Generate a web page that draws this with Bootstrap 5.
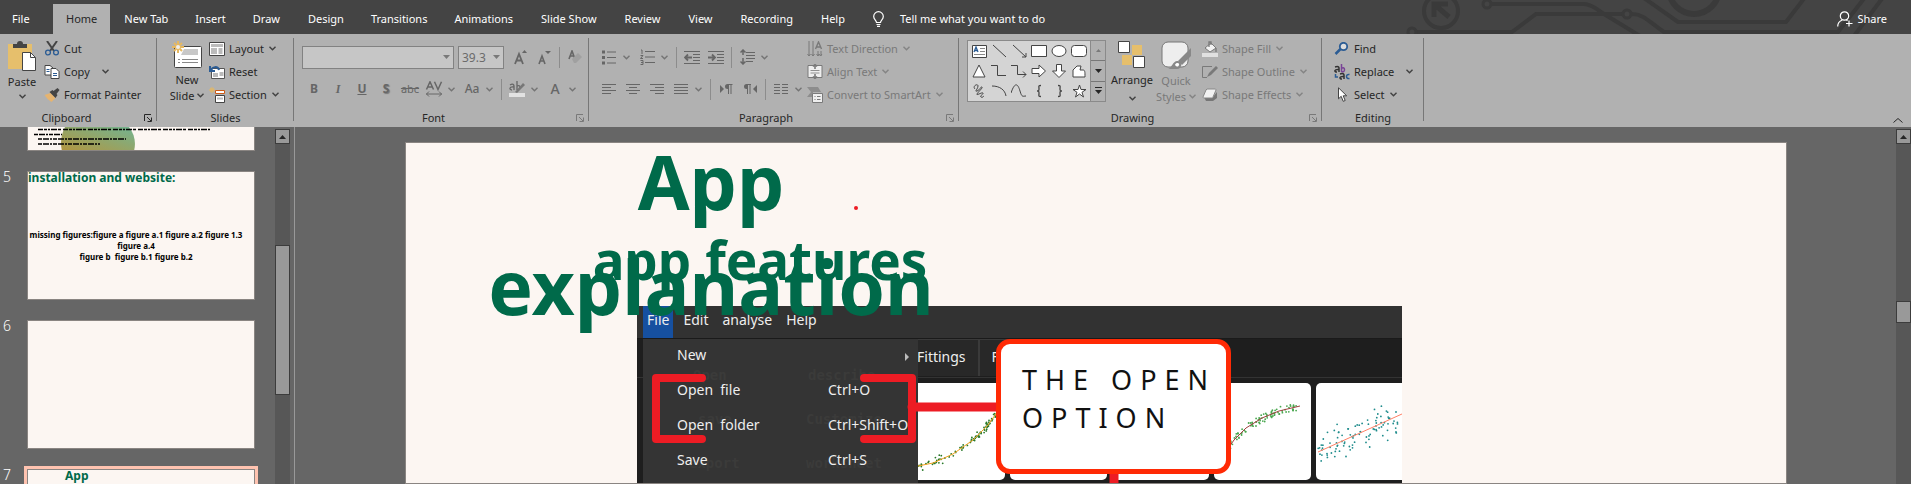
<!DOCTYPE html>
<html lang="en">
<head>
<meta charset="utf-8">
<meta name="viewport" content="width=device-width, initial-scale=1">
<title>Presentation editor</title>
<link href="https://cdn.jsdelivr.net/npm/bootstrap@5.3.0/dist/css/bootstrap.min.css" rel="stylesheet">
<style>
body{font-family:"Noto Sans","Open Sans",sans-serif;font-size:11px;line-height:16px;background:#666;color:#262626;height:100vh;overflow:hidden}
svg{display:block;flex:none}
button{font:inherit;color:inherit;background:none;border:0;padding:0}
/* title tabs */
.topbar{background:#444;height:34px;color:#fff}
.topbar .circuit{position:absolute;right:0;top:0}
.tab{padding:7px 14px 0;height:30px;white-space:nowrap;color:#fff;text-decoration:none;line-height:16px}
.tab-first{width:53px;padding-left:12px}
.tab-slim{padding-left:13px;padding-right:13px}
.tab-on{background:#b1b1b1;color:#262626}
.tab-share{padding-right:24px}
/* ribbon */
.ribbon{background:#b1b1b1;height:93px}
.grp{padding:3px 0 0;position:relative;flex:none;display:flex;flex-direction:column}
.grp::after{content:"";position:absolute;right:0;top:4px;bottom:6px;width:1px;background:#777}
.grp-body{height:70px;display:flex}
.grp-label{text-align:center;line-height:16px;margin-top:3px;position:relative}
.launch{position:absolute;right:5px;top:4px}
.g-clip{width:157px}.g-slides{width:137px}.g-font{width:295px}.g-para{width:370px}.g-draw{width:363px}.g-edit{width:102px}
.cmd{display:flex;align-items:center;gap:4px;height:23px;white-space:nowrap}
.cmd .chev{margin-left:1px}
.cmd .far{margin-left:8px}
.big{display:flex;flex-direction:column;align-items:center;line-height:16px;padding-top:4px;width:44px}
.big svg:first-child{margin-bottom:3px}
.off{color:#797979}
.chev{width:7px;height:5px;fill:none;stroke:currentColor;stroke-width:1.4;opacity:.8}
.ib{width:24px;height:24px;display:flex;align-items:center;justify-content:center;flex:none;color:#666}
.ib.dd{width:38px;display:grid;grid-template-columns:24px 14px;justify-items:center}
.ib.dd .chev{justify-self:start;margin-left:2px}
.vsep{width:1px;height:21px;background:#8c8c8c;margin:0 3px}
.g-txt{font-size:12px;font-weight:700;line-height:16px}
.g-case{font-size:12px;font-weight:500}
.g-tall{font-size:14px;font-weight:500}
.para-icons{width:210px}
.combo{position:relative;height:23px}
.combo input{width:100%;height:100%;border:1px solid #828282;background:#c6c6c6;color:#6b6b6b;font-size:12px;padding:0 3px;border-radius:0;display:block}
.combo svg{position:absolute;right:4px;top:9px}
.name-box{width:152px}.size-box{width:46px}
.gallery{width:139px;height:62px;background:#d4d4d4;border:1px solid #8a8a8a;margin-top:3px}
.shapes{display:grid;grid-template-columns:repeat(6,20px);grid-auto-rows:20px;padding-left:1px;width:122px}
.shapes button{display:flex;align-items:center;justify-content:center}
.gal-nav{border-left:1px solid #8a8a8a;flex:1;display:flex;flex-direction:column}
.gal-nav button{flex:1;display:flex;align-items:center;justify-content:center;background:#b1b1b1}
.gal-nav button+button{border-top:1px solid #777}
.flip{transform:scaleY(-1)}
/* work area */
.work{min-height:0}
.thumbs{width:275px;flex:none;overflow:hidden}
.row-th{display:flex;margin-bottom:20px}
.num{width:27px;padding-left:3px;color:#fff;font-size:14px;line-height:12px;font-weight:300;flex:none}
.th{width:228px;height:129px;border:1px solid #8a8582;background:#fcf6f2;position:relative;overflow:hidden;color:#000;flex:none}
.th-cut{height:24px}
.th-sel{outline:3px solid #ffc3b0;outline-offset:0}
.th h2{font-size:12px;line-height:12px;font-weight:700;color:#006a4a;margin:0}
.th-sel h2{padding-left:37px}
.th p{font-size:8px;line-height:11px;font-weight:700;text-align:center;margin:45px 0 0;padding-right:10px;white-space:nowrap}
.sbar{width:15px;flex:none;background:#575757;display:flex;flex-direction:column;margin-top:2px}
.sbar button,.knob{border:1px solid #3c3c3c;background:#999;flex:none}
.sbar button{height:15px;display:flex;align-items:center;justify-content:center}
.knob-a{height:150px;margin-top:101px}.knob-b{height:22px;margin-top:157px}
.stage{border-left:1px solid #999;margin-left:4px;padding:15px 109px 0 110px;min-width:0;overflow:hidden}
.slide{background:#fcf6f2;border:1px solid #8a8582;height:100%;position:relative;overflow:hidden}
.ttl{position:absolute;left:75px;top:-14px;width:460px;text-align:center;font-size:75px;line-height:105px;font-weight:700;color:#006a4a;margin:0;z-index:2}
.sub{position:absolute;left:184px;top:80px;width:340px;text-align:center;font-size:53px;line-height:74px;font-weight:700;color:#006a4a;margin:0;z-index:2;white-space:nowrap}
.shot{position:absolute;left:231px;top:163px;width:765px;height:200px;background:#1e1e1e;color:#eee;font-size:14px;line-height:20px;overflow:hidden}
.mbar{height:33px;background:#323232;padding-left:6px;border-bottom:1px solid #1a1a1a}
.mbar span{padding:4px 4px 0;margin-right:6px}
.mbar .hot{background:#1650a0}
.menu{position:absolute;left:6px;top:33px;width:275px;height:170px;background:#343434;z-index:1}
.mi{display:grid;grid-template-columns:151px 1fr;padding:0 0 4px 34px;height:35px;align-items:center;white-space:pre;position:relative}
.ghost{position:absolute;font:700 14px/20px "DejaVu Sans Mono",monospace;color:#3b3b3a}
.stab{border:1px solid #3a3a3a;border-bottom:0;background:#282828;height:37px;padding:7px 12px}
.stabs{padding-left:267px}
.plots{border-top:1px solid #333;margin-top:1px;padding:5px 0 0 271px;display:flex;gap:5px}
.plot{width:97px;height:97px;background:#fff;border-radius:5px;flex:none}
.over{position:absolute;left:0;top:0;z-index:3}
.callout{position:absolute;left:590px;top:196px;width:235px;height:135px;border:5px solid #ff2a05;border-radius:14px;background:#fff;z-index:4;color:#111;font-size:27px;line-height:38px;letter-spacing:8px;padding:17px 0 0 21px;white-space:nowrap}
</style>
</head>
<body class="d-flex flex-column">
<svg width="0" height="0" class="position-absolute">
<defs>
<symbol id="ch" viewBox="0 0 7 5"><path d="M.5.8 3.5 3.8 6.5.8"/></symbol>
<symbol id="tri" viewBox="0 0 7 4"><path d="M0 0h7L3.500 4z" fill="currentColor"/></symbol>
<symbol id="lau" viewBox="0 0 8 8"><path d="M.5 7V.5H7M3 3l4 4M7.500 3.500v4h-4" fill="none" stroke="currentColor"/></symbol>
</defs>
</svg>

<header class="topbar d-flex align-items-end position-relative flex-shrink-0">
<svg class="circuit" width="531" height="34" viewBox="0 0 531 34" fill="none" stroke="#3a3a3a" stroke-width="4"><circle cx="61" cy="11" r="17"/><path d="M54 17V4h14M54 4l15 13" stroke-width="5"/><circle cx="107" cy="4" r="4" stroke-width="3"/><path d="M112 4h92c8 0 14 6 20 10l36 22"/><path d="M36 32h96l24-18h86"/><circle cx="32" cy="32" r="4" stroke-width="3"/><circle cx="247" cy="14" r="4" stroke-width="3"/><path d="M252 14c12 0 17 8 32 18h174l28-36M264-2l34 24h108l20-26M474 36l30-40"/><circle cx="314" cy="-11" r="25" stroke-width="6"/></svg>
<nav class="d-flex flex-grow-1 position-relative">
<a href="#" class="tab tab-first">File</a><a href="#" class="tab tab-slim tab-on" aria-current="page">Home</a><a href="#" class="tab">New Tab</a><a href="#" class="tab tab-slim">Insert</a><a href="#" class="tab">Draw</a><a href="#" class="tab">Design</a><a href="#" class="tab tab-slim">Transitions</a><a href="#" class="tab">Animations</a><a href="#" class="tab">Slide Show</a><a href="#" class="tab">Review</a><a href="#" class="tab">View</a><a href="#" class="tab">Recording</a><a href="#" class="tab">Help</a>
<a href="#" class="tab d-flex gap-3"><svg width="11" height="16" viewBox="0 0 11 16" fill="none" stroke="#fff" stroke-width="1.200"><path d="M3.500 11.500c0-2-2.800-3-2.800-6a4.800 4.800 0 0 1 9.600 0c0 3-2.800 4-2.800 6zM3.500 13.500h4M4 15.400h3"/></svg>Tell me what you want to do</a>
<a href="#" class="tab tab-share d-flex gap-1 ms-auto"><svg width="16" height="16" viewBox="0 0 16 16" fill="none" stroke="#fff" stroke-width="1.200"><circle cx="7.500" cy="5" r="4.200"/><path d="M.7 15.500c0-3 2-5.500 4.500-6.500M9.500 9l1 .8M12 9.500v6M9 12.500h6.500"/></svg>Share</a>
</nav>
</header>

<section class="ribbon d-flex flex-shrink-0 position-relative">
<div class="grp g-clip">
<div class="grp-body">
<button class="big"><svg width="28" height="30" viewBox="0 0 28 30"><path d="M0 3h24v25H0z" fill="#e6bf6c"/><path d="M5 7V3h4a3 3 0 0 1 6 0h4v4z" fill="#444"/><path d="M14.500 11.500h8l5 5v13h-13z" fill="#fff" stroke="#444"/><path d="M22.500 11.500v5h5" fill="none" stroke="#444"/></svg>Paste<svg class="chev mt-1"><use href="#ch"/></svg></button>
<div class="ms-0">
<button class="cmd"><svg width="16" height="15" viewBox="0 0 14 15" fill="none"><path d="M2 0l7 10M12 0L5 10" stroke="#444" stroke-width="2"/><circle cx="3" cy="11.500" r="2.400" stroke="#2b5c94" stroke-width="1.300"/><circle cx="11" cy="11.500" r="2.400" stroke="#2b5c94" stroke-width="1.300"/></svg>Cut</button>
<button class="cmd"><svg width="16" height="14" viewBox="0 0 15 14" fill="#fff" stroke="#444"><path d="M.5.500h5l3 2.500v7h-8z"/><path d="M6.500 3.500h5l3 3v7h-8z"/><path d="M2 4.500h3M2 6.500h3M8.500 8.500h4M8.500 10.500h4" stroke="#2b5c94"/></svg>Copy<svg class="chev far"><use href="#ch"/></svg></button>
<button class="cmd"><svg width="16" height="14" viewBox="0 0 15 14"><path d="M0 7l6-2 5 5-4 4C4 12 2 10 0 7z" fill="#e6b470"/><path d="M5 4l3-2 5 5-2 3zM9 3l4-3 2 2-3 4z" fill="#444"/></svg>Format Painter</button>
</div>
</div>
<div class="grp-label pe-4">Clipboard<svg class="launch" width="8" height="8"><use href="#lau"/></svg></div>
</div>

<div class="grp g-slides">
<div class="grp-body">
<button class="big ms-2"><svg width="31" height="28" viewBox="0 0 31 28"><rect x="2.500" y="5.500" width="27" height="21" rx="1" fill="#fff" stroke="#444"/><path d="M12 8h14v6H9z" fill="#c8c8c8"/><path d="M6 18.500h2M10 18.500h16M6 21.500h2M10 21.500h16" stroke="#888"/><path d="M6 0v12M0 6h12M2 2l8 8M10 2l-8 8" stroke="#e6b860" stroke-width="2"/><circle cx="6" cy="6" r="2" fill="#eee"/></svg>New<span>Slide <svg class="chev d-inline"><use href="#ch"/></svg></span></button>
<div>
<button class="cmd"><svg width="16" height="14" viewBox="0 0 16 14"><path d="M.5.500h15v13H.5z" fill="#fff" stroke="#444"/><path d="M2 2h12v3H2zM2 6h6v6H2z" fill="#bbb"/><path d="M9.500 7h4M9.500 9h4M9.500 11h4" stroke="#777"/></svg>Layout<svg class="chev"><use href="#ch"/></svg></button>
<button class="cmd"><svg width="16" height="14" viewBox="0 0 16 14"><path d="M2.500 3.500h13v10h-13z" fill="#fff" stroke="#555"/><path d="M4 8h5v4H4z" fill="#bbb"/><path d="M10.500 8h4M10.500 10h4" stroke="#777"/><path d="M2 6c1-5 7-5 8-1M1 1v5h5" fill="none" stroke="#2b5c94" stroke-width="2"/></svg>Reset</button>
<button class="cmd"><svg width="16" height="16" viewBox="0 0 16 16"><path d="M6.500 3.500h9v3h-9z" fill="#fff" stroke="#cc5a15"/><path d="M6.500 8.500h9v7h-9z" fill="#fff" stroke="#444"/><path d="M8 10.500h6v2H8z" fill="#bbb"/><path d="M3 0v6M0 3h6M1 1l4 4M5 1L1 5" stroke="#e6b860"/></svg>Section<svg class="chev"><use href="#ch"/></svg></button>
</div>
</div>
<div class="grp-label">Slides</div>
</div>

<div class="grp g-font">
<div class="grp-body flex-column ps-2">
<div class="d-flex align-items-center mt-2">
<div class="combo name-box"><input aria-label="Font"><svg width="7" height="4" class="off"><use href="#tri"/></svg></div>
<div class="combo size-box ms-1"><input aria-label="Font size" value="39.3"><svg width="7" height="4" class="off"><use href="#tri"/></svg></div>
<button class="ib ms-1" aria-label="Grow font"><svg width="13" height="15" viewBox="0 0 13 15"><path d="M1 14L5 4l4 10M2.500 10.500h5" fill="none" stroke="currentColor" stroke-width="1.800"/><path d="M8 3l2.500-3L13 3z" fill="currentColor"/></svg></button>
<button class="ib" aria-label="Shrink font"><svg width="13" height="15" viewBox="0 0 13 15"><path d="M1 14l3-8 3 8M2.500 11h4" fill="none" stroke="currentColor" stroke-width="1.600"/><path d="M7 1h6l-3 3z" fill="currentColor"/></svg></button>
<div class="vsep"></div>
<button class="ib" aria-label="Clear formatting"><svg width="15" height="14" viewBox="0 0 15 14"><path d="M1 9l3-8 3 8M2 6h4" fill="none" stroke="currentColor" stroke-width="1.600"/><path d="M4 9l6-6 4 4-6 6H6z" fill="#a0a0a0"/></svg></button>
</div>
<div class="d-flex align-items-center mt-2">
<button class="ib g-txt">B</button><button class="ib g-txt fst-italic" style="font-family:'Liberation Serif',serif">I</button><button class="ib g-txt text-decoration-underline">U</button><button class="ib g-txt" style="text-shadow:1px 1px 1px #777">S</button><button class="ib text-decoration-line-through">abc</button>
<button class="ib dd" aria-label="Character spacing"><svg width="18" height="16" viewBox="0 0 18 16" fill="none" stroke="currentColor"><path d="M1.500 8.500L5 .8l3.500 7.700M3 6h4M9.500.8L13 8.500 16.500.8" stroke-width="1.500"/><path d="M1 13h16M4 10.500L1.500 13 4 15.500M14 10.500l2.500 2.500-2.500 2.500"/></svg><svg class="chev"><use href="#ch"/></svg></button>
<button class="ib dd g-case">Aa<svg class="chev"><use href="#ch"/></svg></button>
<div class="vsep"></div>
<button class="ib dd" aria-label="Highlight"><svg width="16" height="16" viewBox="0 0 16 16"><path d="M0 12h16v4H0z" fill="#e2e2e2"/><path d="M1 4c3-2 4 0 4 1v4M5 6C0 5 0 9 3 9M8 0v9M8 5c4-2 4 4 0 4" fill="none" stroke="currentColor" stroke-width="1.300"/><path d="M6 11L14 2l2 2-8 8z" fill="#777"/></svg><svg class="chev"><use href="#ch"/></svg></button>
<button class="ib dd g-tall">A<svg class="chev"><use href="#ch"/></svg></button>
</div>
</div>
<div class="grp-label pe-3">Font<svg class="launch off" width="8" height="8"><use href="#lau"/></svg></div>
</div>

<div class="grp g-para">
<div class="grp-body ps-2">
<div class="para-icons">
<div class="d-flex align-items-center mt-2">
<button class="ib dd" aria-label="Bullets"><svg width="14" height="15" viewBox="0 0 14 15" stroke="currentColor"><path d="M5 2h9M5 7.500h9M5 13h9"/><path d="M0 2h3M0 7.500h3M0 13h3" stroke-width="3"/></svg><svg class="chev"><use href="#ch"/></svg></button>
<button class="ib dd" aria-label="Numbering"><svg width="15" height="16" viewBox="0 0 15 16" stroke="currentColor" fill="none"><path d="M5 2.500h10M5 8h10M5 13.500h10M1 1h1v4M.500 6.500H3l-2.500 3H3M.500 11.500H3v4H.500M1 13.500h2"/></svg><svg class="chev"><use href="#ch"/></svg></button>
<div class="vsep"></div>
<button class="ib" aria-label="Decrease indent"><svg width="16" height="13" viewBox="0 0 16 13" stroke="currentColor" fill="none"><path d="M0 .500h16M9 3.500h7M9 6.500h7M9 9.500h7M0 12.500h16"/><path d="M1 6.500h7M4 3.500l-3 3 3 3" stroke-width="1.800"/></svg></button>
<button class="ib" aria-label="Increase indent"><svg width="16" height="13" viewBox="0 0 16 13" stroke="currentColor" fill="none"><path d="M0 .500h16M9 3.500h7M9 6.500h7M9 9.500h7M0 12.500h16"/><path d="M0 6.500h7M4 3.500l3 3-3 3" stroke-width="1.800"/></svg></button>
<div class="vsep"></div>
<button class="ib dd" aria-label="Line spacing"><svg width="15" height="16" viewBox="0 0 15 16" stroke="currentColor" fill="none"><path d="M6 3.500h9M6 6.500h9M6 9.500h9M6 12.500h7"/><path d="M3 1v5M.5 3.500L3 1l2.500 2.500M3 9v6M.5 12.500L3 15l2.500-2.500" stroke-width="1.500"/></svg><svg class="chev"><use href="#ch"/></svg></button>
</div>
<div class="d-flex align-items-center mt-2">
<button class="ib" aria-label="Align left"><svg width="14" height="11" viewBox="0 0 14 11" stroke="currentColor"><path d="M0 .500h14M0 3.500h9M0 6.500h14M0 9.500h9"/></svg></button>
<button class="ib" aria-label="Center"><svg width="14" height="11" viewBox="0 0 14 11" stroke="currentColor"><path d="M0 .500h14M3 3.500h8M0 6.500h14M3 9.500h8"/></svg></button>
<button class="ib" aria-label="Align right"><svg width="14" height="11" viewBox="0 0 14 11" stroke="currentColor"><path d="M0 .500h14M5 3.500h9M0 6.500h14M5 9.500h9"/></svg></button>
<button class="ib dd" aria-label="Justify"><svg width="14" height="11" viewBox="0 0 14 11" stroke="currentColor"><path d="M0 .500h14M0 3.500h14M0 6.500h14M0 9.500h14"/></svg><svg class="chev"><use href="#ch"/></svg></button>
<div class="vsep"></div>
<button class="ib" aria-label="Left to right"><svg width="13" height="10" viewBox="0 0 13 10" fill="currentColor"><path d="M0 1l4 4-4 4zM12.500 0H7.500a2.500 2.500 0 0 0 0 5H8v5h1V1h1.500v9h1V1h1z"/></svg></button>
<button class="ib" aria-label="Right to left"><svg width="13" height="10" viewBox="0 0 13 10" fill="currentColor"><path d="M13 1L9 5l4 4zM7 0H2.500a2.500 2.500 0 0 0 0 5H3v5h1V1h1.500v9h1V1H7z"/></svg></button>
<div class="vsep"></div>
<button class="ib dd" aria-label="Columns"><svg width="14" height="11" viewBox="0 0 14 11" stroke="currentColor"><path d="M0 .500h6M8 .500h6M0 3.500h6M8 3.500h6M0 6.500h6M8 6.500h6M0 9.500h6M8 9.500h6"/></svg><svg class="chev"><use href="#ch"/></svg></button>
</div>
</div>
<div class="off">
<button class="cmd"><svg width="16" height="16" viewBox="0 0 15 16" stroke="currentColor" fill="none"><path d="M1.500 0v15M5.500 0v15M10.500 10v5M13.500 10v5M0 13l1.500 2L3 13M4 13l1.500 2L7 13M9 13l1.500 2 1-2 1.500 2 1.500-2"/><path d="M8 8l3-7 3 7M9 6h4" stroke-width="1.400"/></svg>Text Direction<svg class="chev"><use href="#ch"/></svg></button>
<button class="cmd"><svg width="16" height="15" viewBox="0 0 15 15" stroke="currentColor" fill="none"><path d="M.5 1.500h14v12H.5z" fill="#eee"/><path d="M3 6.500h9M3 9h9" stroke-width=".8"/><path d="M7.500 0v5M5.500 2.500l2-2 2 2M7.500 10v5M5.500 12.500l2 2 2-2" stroke-width="1.600"/></svg>Align Text<svg class="chev"><use href="#ch"/></svg></button>
<button class="cmd"><svg width="16" height="16" viewBox="0 0 16 16"><path d="M0 0h11l3 5H6v5H0l4-5z" fill="#8d8d8d"/><path d="M5.500 6.500h10v9h-10z" fill="#eee" stroke="currentColor"/><path d="M7.500 9.500h1M10 9.500h3.500M7.500 12.500h1M10 12.500h3.500" stroke="currentColor"/></svg>Convert to SmartArt<svg class="chev"><use href="#ch"/></svg></button>
</div>
</div>
<div class="grp-label pe-3">Paragraph<svg class="launch off" width="8" height="8"><use href="#lau"/></svg></div>
</div>

<div class="grp g-draw">
<div class="grp-body ps-2">
<div class="gallery d-flex">
<div class="shapes">
<button aria-label="Text box"><svg width="15" height="13" viewBox="0 0 15 13"><path d="M.5.500h14v12H.5z" fill="#fff" stroke="#444"/><path d="M2 7l2-5 2 5M3 5.500h2" stroke="#2b5c94" stroke-width="1.300" fill="none"/><path d="M8 3.500h5M8 6.500h5M2 9.500h11" stroke="#888"/></svg></button>
<button aria-label="Line"><svg width="15" height="14" viewBox="0 0 15 14" stroke="#444"><path d="M1 1l13 12"/></svg></button>
<button aria-label="Arrow"><svg width="15" height="14" viewBox="0 0 15 14" stroke="#444" fill="none"><path d="M1 1l13 12M14 9v4h-4"/></svg></button>
<button aria-label="Rectangle"><svg width="16" height="12" viewBox="0 0 16 12" stroke="#444" fill="#fff"><path d="M.5.500h15v11H.5z"/></svg></button>
<button aria-label="Oval"><svg width="16" height="12" viewBox="0 0 16 12" stroke="#444" fill="#fff"><ellipse cx="8" cy="6" rx="7" ry="5.500"/></svg></button>
<button aria-label="Rounded rectangle"><svg width="16" height="12" viewBox="0 0 16 12" stroke="#444" fill="#fff"><rect x=".5" y=".5" width="15" height="11" rx="3"/></svg></button>
<button aria-label="Triangle"><svg width="14" height="14" viewBox="0 0 14 14" stroke="#444" fill="#fff"><path d="M7 1l6 12H1z"/></svg></button>
<button aria-label="Elbow"><svg width="16" height="14" viewBox="0 0 16 14" stroke="#444" fill="none"><path d="M0 1.500h6.500v10H15"/></svg></button>
<button aria-label="Elbow arrow"><svg width="16" height="14" viewBox="0 0 16 14" stroke="#444" fill="none"><path d="M0 1.500h6.500v9H15M12 7.500l3 3-3 3"/></svg></button>
<button aria-label="Right arrow"><svg width="16" height="14" viewBox="0 0 16 14" stroke="#444" fill="#fff"><path d="M1 4.500h7V1l6.500 6L8 13V9.500H1z"/></svg></button>
<button aria-label="Down arrow"><svg width="16" height="14" viewBox="0 0 16 14" stroke="#444" fill="#fff"><path d="M5.500.500h5V7h4L8 13.500 1.500 7h4z"/></svg></button>
<button aria-label="Freeform"><svg width="14" height="14" viewBox="0 0 14 14" stroke="#444" fill="#fff"><path d="M1 13V6l4-4h4L8 6h3c2 0 2 2 2 7z"/></svg></button>
<button aria-label="Scribble"><svg width="14" height="14" viewBox="0 0 14 14" stroke="#444" fill="none"><path d="M3 5c-3-3 3-6 3-3S2 8 5 7s4-5 5-4-4 5-5 7 5-2 6-1-4 3-2 4 3-1 2-1"/></svg></button>
<button aria-label="Arc"><svg width="16" height="14" viewBox="0 0 16 14" stroke="#444" fill="none"><path d="M1 2c8 0 13 4 14 10"/></svg></button>
<button aria-label="Curve"><svg width="16" height="14" viewBox="0 0 16 14" stroke="#444" fill="none"><path d="M0 9C4-3 7 0 9 7s3 5 6 5"/></svg></button>
<button aria-label="Left brace"><svg width="14" height="14" viewBox="0 0 14 14" stroke="#444" fill="none" stroke-width="1.300"><path d="M9 1.500c-3 0-2 1-2 3S7 7 5 7c2 0 2 .5 2 2.500s-1 3 2 3"/></svg></button>
<button aria-label="Right brace"><svg width="14" height="14" viewBox="0 0 14 14" stroke="#444" fill="none" stroke-width="1.300"><path d="M6 1.500c3 0 2 1 2 3S8 7 10 7c-2 0-2 .5-2 2.500s1 3-2 3"/></svg></button>
<button aria-label="Star"><svg width="15" height="14" viewBox="0 0 15 14" stroke="#444" fill="#fff"><path d="M7.500 1L9 5.500h5L10 8.300l1.500 4.700-4-3-4 3L5 8.300 1 5.500h5z"/></svg></button>
</div>
<div class="gal-nav"><button class="off" aria-label="Previous shapes"><svg width="5" height="3" class="flip"><use href="#tri"/></svg></button><button aria-label="Next shapes"><svg width="7" height="4"><use href="#tri"/></svg></button><button aria-label="More shapes"><svg width="7" height="8" viewBox="0 0 7 8"><path d="M0 .500h7" stroke="#262626"/><path d="M0 3h7L3.500 7z" fill="#262626"/></svg></button></div>
</div>
<button class="big ms-1"><svg width="28" height="28" viewBox="0 0 28 28"><path d="M14 4h10v10H14zM4 14h10v10H4z" fill="#e6bf6c"/><path d="M.5.500h11v11H.5zM15.500 15.500h11v11h-11z" fill="#fff" stroke="#444"/></svg>Arrange<svg class="chev mt-2"><use href="#ch"/></svg></button>
<button class="big off"><svg width="30" height="29" viewBox="0 0 30 29"><rect x="1" y="1" width="26" height="25" rx="6" fill="#eee" stroke="#777"/><path d="M30 7v8l-9 9-4-4z" fill="#888"/><path d="M7 28c4-1 5-9 10-8s4 8-1 8z" fill="#888"/><path d="M14 24c1-3 5-2 4 0s-2 2-4 0z" fill="#fff"/></svg>Quick<span>Styles <svg class="chev d-inline"><use href="#ch"/></svg></span></button>
<div class="off ms-1">
<button class="cmd"><svg width="16" height="16" viewBox="0 0 16 16"><path d="M0 12h16v4H0z" fill="#e0e0e0"/><path d="M3 7l6-5 5 5-6 4z" fill="#f2f2f2" stroke="currentColor"/><path d="M7 6V1h2v3M14 7v4" fill="none" stroke="currentColor" stroke-width="1.300"/></svg>Shape Fill<svg class="chev"><use href="#ch"/></svg></button>
<button class="cmd"><svg width="16" height="14" viewBox="0 0 16 14"><path d="M10 1.500H.5v11H5" fill="none" stroke="currentColor"/><path d="M5 12l2-4 7-7 2 2-7 7z" fill="currentColor"/></svg>Shape Outline<svg class="chev"><use href="#ch"/></svg></button>
<button class="cmd"><svg width="16" height="14" viewBox="0 0 16 14"><path d="M4 13h7l4-3V4l-4 5H2z" fill="#777"/><path d="M5 1h8c1 0 1 1 1 1l-3 7c0 1-1 1-1 1H2c-1 0-1-1-1-1l3-7z" fill="#f2f2f2" stroke="#888"/></svg>Shape Effects<svg class="chev"><use href="#ch"/></svg></button>
</div>
</div>
<div class="grp-label pe-3">Drawing<svg class="launch off" width="8" height="8"><use href="#lau"/></svg></div>
</div>

<div class="grp g-edit">
<div class="grp-body ps-2">
<div class="ms-1">
<button class="cmd"><svg width="16" height="13" viewBox="0 0 16 13" fill="none" stroke="#2b5c94"><circle cx="9.500" cy="4.500" r="3.700" stroke-width="1.800" fill="#ddd"/><path d="M6.500 7L1.500 12" stroke-width="2.500"/></svg>Find</button>
<button class="cmd"><svg width="16" height="16" viewBox="0 0 16 16" fill="none" stroke-width="1.500"><path d="M1 3c3-1 4 0 4 1v4M5 5.500C0 5 0 8 3 8" stroke="#333"/><path d="M7.500 0v8M7.500 4.500c4-3 4 5 0 3" stroke="#7a4496"/><path d="M6 10c3-1 4 0 4 1v4M10 12.500C5 12 5 15 8 15" stroke="#333"/><path d="M15.500 10.500c-4-1-4 5 0 4M1.500 10v3H4" stroke="#2b5c94"/></svg>Replace<svg class="chev far"><use href="#ch"/></svg></button>
<button class="cmd"><svg width="16" height="15" viewBox="0 0 16 15"><path d="M4.500.800v11l2.700-2.500 2 5 2-.8-2-4.700h3.500z" fill="#fff" stroke="#444"/></svg>Select<svg class="chev"><use href="#ch"/></svg></button>
</div>
</div>
<div class="grp-label">Editing</div>
</div>
<button class="ms-auto align-self-end me-2 mb-1" aria-label="Collapse ribbon"><svg width="10" height="6" viewBox="0 0 10 6" fill="none" stroke="#262626"><path d="M.5 5.500l4.500-4 4.500 4"/></svg></button>
</section>

<main class="work d-flex flex-grow-1">
<aside class="thumbs">
<div class="row-th"><div class="num"></div><div class="th th-cut border-top-0"><svg width="226" height="24" viewBox="0 0 226 24"><defs><linearGradient id="gr" x1="0" y1="1" x2="1" y2="0"><stop offset="0" stop-color="#b3953f"/><stop offset="1" stop-color="#72b592"/></linearGradient></defs><path d="M37 0h64c6 8 7 16 5 24H34c-2-8-1-16 3-24z" fill="url(#gr)"/><g stroke="#000" stroke-width="1.500" fill="none"><path d="M10 2.500h172" stroke-dasharray="5 1 3 1 2 1 6 1 3 2"/><path d="M6 7.500h28M10 12h88M10 17h62" stroke-dasharray="4 1 6 1 2 1"/></g></svg></div></div>
<div class="row-th"><div class="num">5</div><div class="th"><h2>installation and website:</h2><p>missing figures:figure a figure a.1 figure a.2 figure 1.3<br>figure a.4<br>figure b&nbsp; figure b.1 figure b.2</p></div></div>
<div class="row-th"><div class="num">6</div><div class="th"></div></div>
<div class="row-th"><div class="num">7</div><div class="th th-sel"><h2>App</h2></div></div>
</aside>
<div class="sbar"><button aria-label="Scroll up"><svg width="7" height="4" class="flip"><use href="#tri"/></svg></button><div class="knob knob-a"></div></div>
<div class="stage flex-grow-1">
<div class="slide">
<h1 class="ttl">App<br>explanation</h1>
<h2 class="sub">app features</h2>
<div class="shot">
<div class="mbar d-flex"><span class="hot">File</span><span>Edit</span><span>analyse</span><span>Help</span></div>
<div class="menu">
<span class="ghost" style="left:50px;top:26px">Open</span><span class="ghost" style="left:165px;top:26px">describe</span><span class="ghost" style="left:55px;top:70px">save</span><span class="ghost" style="left:163px;top:70px">Customize</span><span class="ghost" style="left:46px;top:114px">export</span><span class="ghost" style="left:163px;top:114px">worksheet</span>
<div class="mi"><span>New</span><svg width="5" height="8" viewBox="0 0 5 8" class="position-absolute end-0 me-2"><path d="M0 0l4 4-4 4z" fill="#bbb"/></svg></div>
<div class="mi"><span>Open  file</span><span>Ctrl+O</span></div>
<div class="mi"><span>Open  folder</span><span>Ctrl+Shift+O</span></div>
<div class="mi"><span>Save</span><span>Ctrl+S</span></div>
</div>
<div class="stabs d-flex"><span class="stab">Fittings</span><span class="stab">F</span></div>
<div class="plots">
<svg class="plot" data-c="#2a7a2a" data-l="#f0a020" data-p="0,85 10,83 25,80 45,71 65,57 80,42 97,18" data-s="5"></svg><svg class="plot"></svg><svg class="plot"></svg>
<svg class="plot" data-c="#4aa850" data-l="#a04040" data-p="0,85 20,57 32,45 48,35 65,28 86,23" data-s="5"></svg>
<svg class="plot" data-c="#1f8c8c" data-l="#ff8066" data-p="2,69 97,26" data-s="20"></svg>
</div>
</div>
<svg class="over" width="1000" height="360" viewBox="0 0 1000 360" fill="none" stroke="#ed1c24" stroke-width="8" stroke-linecap="round" stroke-linejoin="round"><circle cx="450" cy="65" r="2" fill="#ed1c24" stroke="none"/><path d="M296 235h-46v61h46M458 235h48v61h-48"/><path d="M506 264h90M708 325v40" stroke-width="9"/></svg>
<div class="callout">THE OPEN<br>OPTION</div>
</div>
</div>
<div class="sbar"><button aria-label="Scroll up"><svg width="7" height="4" class="flip"><use href="#tri"/></svg></button><div class="knob knob-b"></div></div>
</main>
<script>
// scatter points spread around each fitted curve
let seed = 7;
const rnd = () => (seed = (seed * 16807) % 2147483647) / 2147483647;
document.querySelectorAll('.plot[data-p]').forEach(el => {
  const d = el.dataset, pts = d.p.split(' ').map(p => p.split(',').map(Number));
  let out = '';
  for (let i = 0; i < 110; i++) {
    const k = Math.floor(rnd() * (pts.length - 1)), t = rnd();
    const x = pts[k][0] + t * (pts[k + 1][0] - pts[k][0]);
    const y = pts[k][1] + t * (pts[k + 1][1] - pts[k][1]);
    const dy = (rnd() + rnd() - 1) * d.s;
    out += `<circle cx="${x.toFixed(1)}" cy="${(y + dy).toFixed(1)}" r=".9" fill="${d.c}"/>`;
  }
  el.innerHTML = out + `<polyline points="${d.p}" fill="none" stroke="${d.l}"/>`;
});
</script>
<script src="https://cdn.jsdelivr.net/npm/bootstrap@5.3.0/dist/js/bootstrap.bundle.min.js"></script>
</body>
</html>
